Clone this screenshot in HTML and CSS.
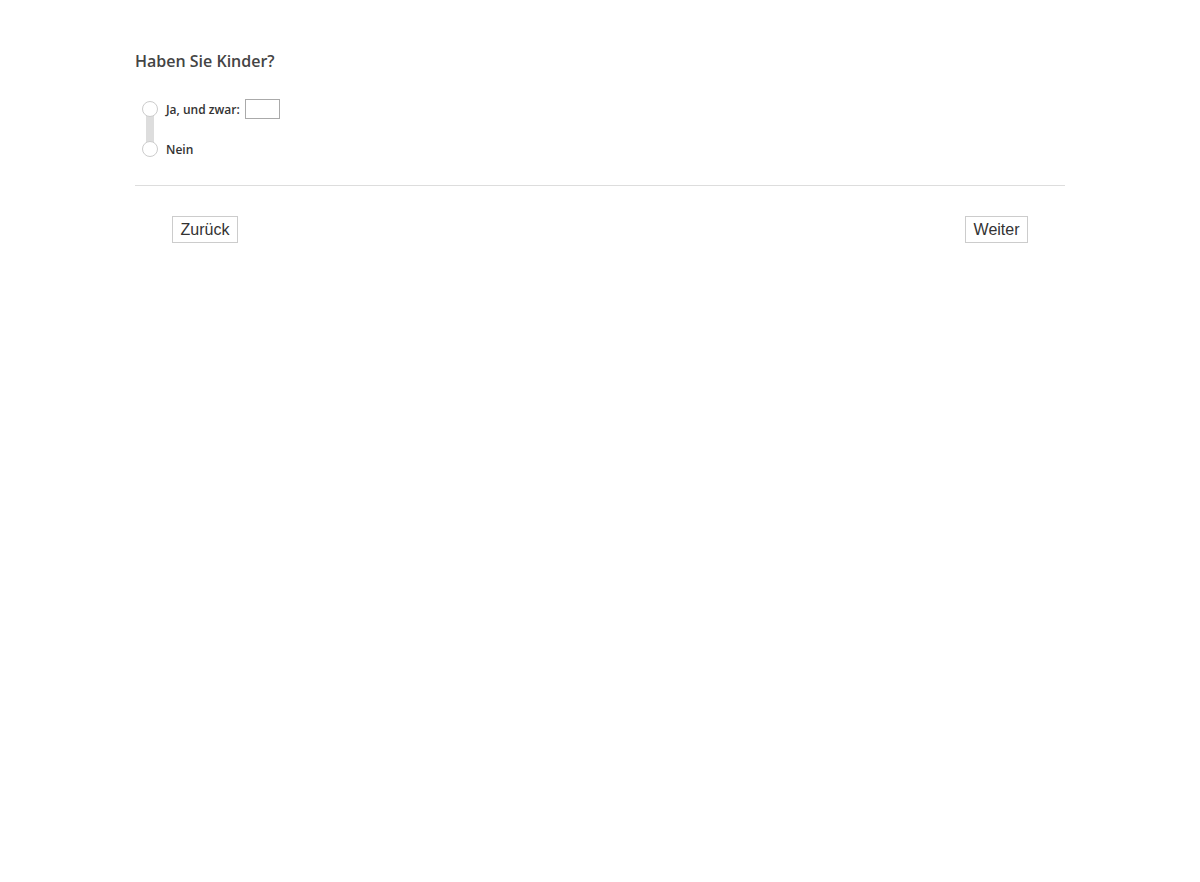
FILE: index.html
```html
<!DOCTYPE html>
<html lang="de">
<head>
  <meta charset="UTF-8">
  <meta name="viewport" content="width=device-width, initial-scale=1.0">
  <title>Fragebogen</title>
  <link rel="stylesheet" href="styles.css">
</head>
<body>
  <div class="page">
    <div class="question">
      <h2 class="question-title">Haben Sie Kinder?</h2>
      <div class="options">
        <span class="options-track"></span>
        <label class="option">
          <input type="radio" name="kinder" value="ja">
          <span class="option-label">Ja, und zwar:</span>
          <input type="text" class="option-text">
        </label>
        <label class="option">
          <input type="radio" name="kinder" value="nein">
          <span class="option-label">Nein</span>
        </label>
      </div>
    </div>

    <div class="nav">
      <button class="nav-button">Zurück</button>
      <button class="nav-button">Weiter</button>
    </div>
  </div>
</body>
</html>
```

FILE: styles.css
```css
body {
  margin: 0;
  background-color: #fff;
  font-family: "Open Sans", Arial, sans-serif;
  color: #444;
}

.page {
  width: 930px;
  margin: 0 auto;
  padding-top: 49px;
}

.question {
  border-bottom: 1px solid #ddd;
  padding-bottom: 26px;
}

.question-title {
  margin: 0 0 26px 0;
  font-size: 16px;
  font-weight: 600;
  line-height: 24px;
  color: #444;
}

.options {
  position: relative;
  padding-left: 7px;
  display: flex;
  flex-direction: column;
  gap: 20px;
}

/* grey bar linking the radio buttons */
.options-track {
  position: absolute;
  left: 11px;
  top: 14px;
  width: 8px;
  height: 30px;
  background-color: #ddd;
}

.option {
  position: relative;
  display: flex;
  align-items: center;
  height: 20px;
  font-size: 12px;
  font-weight: 600;
  color: #333;
}

.option input[type="radio"] {
  appearance: none;
  margin: 0 8px 0 0;
  width: 16px;
  height: 16px;
  border: 1px solid #ccc;
  border-radius: 50%;
  background-color: #fff;
}

.option-text {
  margin-left: 5px;
  width: 35px;
  height: 20px;
  box-sizing: border-box;
  border: 1px solid #aaa;
  padding: 0 2px;
}

.nav {
  display: flex;
  justify-content: space-between;
  padding: 30px 37px 0 37px;
}

.nav-button {
  font-family: "Liberation Sans", Arial, sans-serif;
  font-size: 16px;
  color: #333;
  background-color: #fff;
  border: 1px solid #ccc;
  padding: 3px 7.5px;
  height: 27px;
  cursor: pointer;
}
```
